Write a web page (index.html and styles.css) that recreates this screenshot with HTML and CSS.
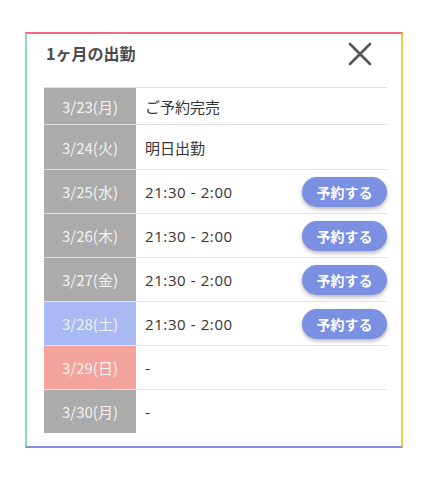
FILE: index.html
```html
<!DOCTYPE html>
<html lang="ja">
<head>
    <meta charset="UTF-8">
    <meta name="viewport" content="width=device-width, initial-scale=1.0">
    <title>1ヶ月の出勤</title>
    <link rel="stylesheet" href="styles.css">
</head>
<body>
<div class="modal">
    <div class="modal-head">
        <h2 class="modal-title">1ヶ月の出勤</h2>
        <button type="button" class="close-btn" aria-label="閉じる">
            <svg width="24" height="24" viewBox="0 0 24 24">
                <path d="M2 2 L22 22 M22 2 L2 22" stroke="#555" stroke-width="2.6" stroke-linecap="round" fill="none"/>
            </svg>
        </button>
    </div>

    <table class="schedule">
        <tr class="first">
            <td class="day">3/23(月)</td>
            <td class="info">ご予約完売</td>
            <td class="act"></td>
        </tr>
        <tr class="second">
            <td class="day">3/24(火)</td>
            <td class="info">明日出勤</td>
            <td class="act"></td>
        </tr>
        <tr>
            <td class="day">3/25(水)</td>
            <td class="info time">21:30 - 2:00</td>
            <td class="act"><button type="button" class="reserve">予約する</button></td>
        </tr>
        <tr>
            <td class="day">3/26(木)</td>
            <td class="info time">21:30 - 2:00</td>
            <td class="act"><button type="button" class="reserve">予約する</button></td>
        </tr>
        <tr>
            <td class="day">3/27(金)</td>
            <td class="info time">21:30 - 2:00</td>
            <td class="act"><button type="button" class="reserve">予約する</button></td>
        </tr>
        <tr>
            <td class="day sat">3/28(土)</td>
            <td class="info time">21:30 - 2:00</td>
            <td class="act"><button type="button" class="reserve">予約する</button></td>
        </tr>
        <tr>
            <td class="day sun">3/29(日)</td>
            <td class="info">-</td>
            <td class="act"></td>
        </tr>
        <tr class="last">
            <td class="day">3/30(月)</td>
            <td class="info">-</td>
            <td class="act"></td>
        </tr>
    </table>
</div>
</body>
</html>
```

FILE: styles.css
```css
/* ページ全体 */
body {
    margin: 0;
    background-color: white;
    font-family: "Noto Sans CJK JP", "Noto Sans", sans-serif;
    color: #333;
}

/* モーダル枠：四辺で色が違う */
.modal {
    box-sizing: border-box;
    width: 378px;
    margin: 32px 0 0 25px;
    padding: 0 14px 13px 17px;
    background-color: white;
    border-style: solid;
    border-width: 2px;
    border-color: #f26a80 #f6c945 #7d90e8 #8fd3d1;
}

.modal-head {
    display: flex;
    justify-content: space-between;
    align-items: center;
    height: 53px;
    padding-left: 2px;
}

.modal-title {
    margin: -16px 0 0 0;
    font-size: 16px;
    font-weight: bold;
    color: #4a4a4a;
}

.close-btn {
    border: none;
    background: none;
    padding: 0;
    width: 24px;
    height: 24px;
    margin: -14px 15px 0 0;
    cursor: pointer;
}

/* 出勤表 */
.schedule {
    width: 343px;
    border-collapse: collapse;
    border-top: 1px solid #dcdcdc;
}

.schedule td {
    height: 43px;
    padding: 0;
    border-bottom: 1px solid #e2e2e2;
    font-size: 15px;
}

.schedule .first td {
    height: 36px;
}

.schedule .second td {
    height: 44px;
}

.schedule .last td {
    border-bottom: none;
}

.day {
    width: 92px;
    text-align: center;
    background-color: #ababab;
    color: #f2f2f2;
}

.day.sat {
    background-color: #a8b9f4;
}

.day.sun {
    background-color: #f4a39c;
}

.info {
    padding-left: 9px !important;
    color: #333;
}

/* 時間の数字は少し幅広 */
.time {
    font-family: "Open Sans", "Noto Sans CJK JP", sans-serif;
    letter-spacing: 0.6px;
}

.act {
    width: 90px;
    text-align: right;
}

.reserve {
    width: 85px;
    height: 30px;
    border: none;
    border-radius: 15px;
    background-color: #7b8fe3;
    color: white;
    font-family: inherit;
    font-size: 14px;
    font-weight: bold;
    box-shadow: 0 2px 4px rgba(0, 0, 0, 0.3);
    vertical-align: middle;
}
```
